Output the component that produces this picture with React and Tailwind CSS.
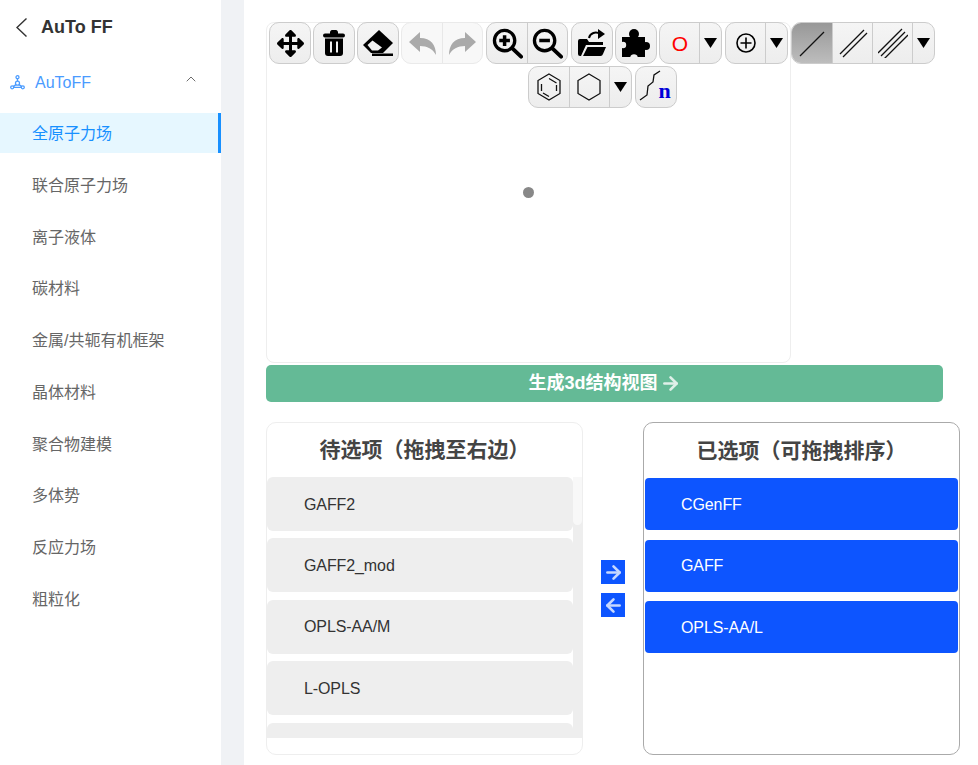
import React from 'react';
import { ChevronUp, ArrowRight, ArrowLeft } from 'lucide-react';
import { FaArrowsAlt } from 'react-icons/fa';

const menuItems = ['全原子力场', '联合原子力场', '离子液体', '碳材料', '金属/共轭有机框架', '晶体材料', '聚合物建模', '多体势', '反应力场', '粗粒化'];
const pending = ['GAFF2', 'GAFF2_mod', 'OPLS-AA/M', 'L-OPLS', ''];
const selected = ['CGenFF', 'GAFF', 'OPLS-AA/L'];

const fontStack = '[font-family:"Liberation_Sans","Noto_Sans_CJK_SC",sans-serif]';

// one cell of a toolbar group
const Cell = ({ w = 'w-[41px]', active, disabled, last, children }) => (
  <div className={`${w} h-full flex items-center justify-center ${last ? '' : 'border-r'} ${
    disabled ? 'border-[#e8e8e8]' : 'border-[#ccc]'
  } ${active ? 'bg-gradient-to-b from-[#989898] to-[#bdbdbd]' : ''}`}>
    {children}
  </div>
);

const Group = ({ disabled, className = '', children }) => (
  <div className={`h-[42px] flex rounded-[10px] overflow-hidden border ${
    disabled ? 'border-[#eaeaea] bg-[#f8f8f8]' : 'border-[#ccc] bg-gradient-to-b from-[#f5f5f5] to-[#ededed]'
  } ${className}`}>
    {children}
  </div>
);

const Caret = () => (
  <svg width="13" height="10" viewBox="0 0 13 10"><path d="M0 0h13L6.5 10z" fill="#000" /></svg>
);

const Trash = () => (
  <svg width="22" height="26" viewBox="0 0 22 26">
    <path d="M7 2.5C7 1 8 0 9 0h4c1 0 2 1 2 2.5V4H7z" fill="#000" />
    <rect x="0" y="3.5" width="22" height="4" rx="2" fill="#000" />
    <path d="M2 8.5h18V23c0 2-1 3-3 3H5c-2 0-3-1-3-3z" fill="#000" />
    <path d="M7 11.5h2v11H7zM13 11.5h2v11h-2z" fill="#f2f2f2" />
  </svg>
);

const Eraser = () => (
  <svg width="30" height="26" viewBox="0 0 30 26">
    <path d="M16 0 30 13 20 23H8L0 15z" fill="#000" />
    <path d="M4.5 15 9.5 10.5 19 17.5 15 20.5H9z" fill="#f2f2f2" />
    <path d="M9 23.5h21V26H9z" fill="#000" />
  </svg>
);

const ReplyArrow = ({ flip }) => (
  <svg width="27" height="23" viewBox="0 0 27 23" className={flip ? '-scale-x-100' : ''}>
    <path d="M0 10 11 0V6C22 6 27 13 27 23 24 17 18 14 11 14V20z" fill="#aaa" />
  </svg>
);

const Magnifier = ({ plus }) => (
  <svg width="31" height="31" viewBox="0 0 32 32">
    <circle cx="13" cy="13" r="10.5" fill="none" stroke="#000" strokeWidth="3.4" />
    <path d="M21 21l9 8.5" stroke="#000" strokeWidth="4" strokeLinecap="round" />
    <path d="M7.5 13h11" stroke="#000" strokeWidth="3.6" />
    {plus && <path d="M13 7.5v11" stroke="#000" strokeWidth="3.6" />}
  </svg>
);

const FolderArrow = () => (
  <svg width="28" height="28" viewBox="0 0 28 28">
    <path d="M0 12a2 2 0 0 1 2-2h7l2 3h14v3H8L3 27H2a2 2 0 0 1-2-2z" fill="#000" />
    <path d="M9.5 18H28l-3 7a3 3 0 0 1-2.5 2H5z" fill="#000" />
    <path d="M11 9C12 4 18 2 22 5" fill="none" stroke="#000" strokeWidth="2" />
    <path d="M20 0l7 5-7 5z" fill="#000" />
  </svg>
);

const Puzzle = () => (
  <svg width="28" height="28" viewBox="0 0 28 28">
    <path d="M0 8h23v20H0z" fill="#000" />
    <circle cx="12" cy="5" r="5" fill="#000" />
    <path d="M9 7h6v3H9z" fill="#000" />
    <circle cx="24" cy="17" r="4" fill="#000" />
    <circle cx="1" cy="16" r="3.2" fill="#f1f1f1" />
    <circle cx="12" cy="29" r="3.8" fill="#efefef" />
  </svg>
);

const Benzene = ({ aromatic }) => (
  <svg width="24" height="28" viewBox="0 0 24 28" fill="none" stroke="#111" strokeWidth="1.3">
    <path d="M12 1 23 7.5v13L12 27 1 20.5v-13z" />
    {aromatic && <path d="M12 5.5 19.5 10M19.5 12v6M4.5 11v7M6 20l6 3.5" />}
  </svg>
);

const Bond = ({ count }) => (
  <svg width="30" height="30" viewBox="0 0 30 30" stroke="#111" strokeWidth="1.3">
    {count === 1 && <path d="M3 28 27 4" />}
    {count === 2 && <><path d="M2 26 26 2" /><path d="M5 29 29 5" /></>}
    {count === 3 && <><path d="M0 25 24 1" /><path d="M3 28 27 4" /><path d="M6 31 30 7" /></>}
  </svg>
);

const Polymer = () => (
  <div className="relative w-[34px] h-[34px]">
    <svg className="absolute left-0 top-0" width="24" height="32" viewBox="0 0 24 32" fill="none" stroke="#111" strokeWidth="1.3">
      <path d="M1 30 8 25 9 16 14 12 15 5 21 1" />
    </svg>
    <span className="absolute left-[20px] top-[8px] text-[22px] leading-[26px] font-bold text-[#0000d8] [font-family:'Liberation_Serif',serif]">n</span>
  </div>
);

const Toolbar = () => (
  <div className="absolute left-0 top-0 w-[672px] flex flex-col items-center gap-[2px]">
    <div className="flex">
      <Group><Cell last w="w-[40px]"><FaArrowsAlt size={27} color="#000" /></Cell></Group>
      <Group className="ml-[2px]"><Cell last w="w-[40px]"><Trash /></Cell></Group>
      <Group className="ml-[2px]"><Cell last w="w-[40px]"><Eraser /></Cell></Group>
      <Group disabled className="ml-[2px]">
        <Cell disabled w="w-[41px]"><ReplyArrow /></Cell>
        <Cell disabled last w="w-[39px]"><ReplyArrow flip /></Cell>
      </Group>
      <Group className="ml-[3px]">
        <Cell w="w-[41px]"><Magnifier plus /></Cell>
        <Cell last w="w-[39px]"><Magnifier /></Cell>
      </Group>
      <Group className="ml-[3px]"><Cell last w="w-[40px]"><FolderArrow /></Cell></Group>
      <Group className="ml-[2px]"><Cell last w="w-[40px]"><Puzzle /></Cell></Group>
      <Group className="ml-[2px]">
        <Cell w="w-[40px]"><span className="pl-[1px] text-[21px] text-[#ff0000] leading-none">O</span></Cell>
        <Cell last w="w-[21px]"><Caret /></Cell>
      </Group>
      <Group className="ml-[3px]">
        <Cell w="w-[40px]">
          <svg width="20" height="20" viewBox="0 0 20 20" fill="none" stroke="#000" strokeWidth="1.6">
            <circle cx="10" cy="10" r="9" />
            <path d="M10 4.5v11M4.5 10h11" />
          </svg>
        </Cell>
        <Cell last w="w-[21px]"><Caret /></Cell>
      </Group>
      <Group className="ml-[3px]">
        <Cell active w="w-[41px]"><Bond count={1} /></Cell>
        <Cell w="w-[40px]"><Bond count={2} /></Cell>
        <Cell w="w-[40px]"><Bond count={3} /></Cell>
        <Cell last w="w-[21px]"><Caret /></Cell>
      </Group>
    </div>
    <div className="flex">
      <Group>
        <Cell w="w-[41px]"><Benzene aromatic /></Cell>
        <Cell w="w-[40px]"><Benzene /></Cell>
        <Cell last w="w-[21px]"><Caret /></Cell>
      </Group>
      <Group className="ml-[3px]"><Cell last w="w-[40px]"><Polymer /></Cell></Group>
    </div>
  </div>
);

const Sidebar = () => (
  <aside className="w-[221px] h-[765px] shrink-0 bg-white">
    <div className="h-[54px] flex items-center pl-[16px]">
      <svg width="11" height="19" viewBox="0 0 11 19" fill="none" stroke="#333" strokeWidth="1.4">
        <path d="M10.5 0.5 1 9.5l9.5 9" />
      </svg>
      <span className="ml-[14px] text-[18px] font-bold text-[#333]">AuTo FF</span>
    </div>
    <div className="h-[56px] flex items-center pl-[10px] pr-[22px] text-[#4a9bff]">
      <svg width="15" height="15" viewBox="0 0 15 15" fill="none" stroke="#4a9bff" strokeWidth="1.3">
        <circle cx="7.5" cy="2.2" r="1.5" />
        <circle cx="7.5" cy="8.2" r="2" />
        <circle cx="2.2" cy="12.3" r="1.5" />
        <circle cx="12.8" cy="12.3" r="1.5" />
        <path d="M7.5 3.7v2.5M6 9.6l-2.6 1.8M9 9.6l2.6 1.8M3.7 12.3h7.6" />
      </svg>
      <span className="ml-[10px] pt-[2px] text-[16px]">AuToFF</span>
      <ChevronUp size={16} strokeWidth={1.3} color="#555" className="ml-auto -mt-[6px]" />
    </div>
    <ul className="mt-[3px]">
      {menuItems.map((item, i) => (
        <li
          key={item}
          className={`h-[40px] mb-[11.75px] pt-[2px] flex items-center pl-[32px] text-[16px] ${
            i === 0 ? 'bg-[#e6f7ff] text-[#1890ff] border-r-[3px] border-[#1890ff]' : 'text-[#666]'
          }`}
        >
          {item}
        </li>
      ))}
    </ul>
  </aside>
);

export default function App() {
  return (
    <div className={`flex w-[978px] h-[765px] overflow-hidden bg-white ${fontStack}`}>
      <Sidebar />
      <div className="w-[23px] shrink-0 bg-[#f0f2f5]" />
      <main className="flex-1 pl-[22px] pt-[22px]">
        <div className="relative w-[677px]">
          <div className="w-[525px] h-[341px] flex items-center justify-center bg-white border border-[#eee] rounded-[8px]">
            <div className="w-[11px] h-[11px] rounded-full bg-[#888] blur-[0.5px]" />
          </div>
          <Toolbar />
        </div>

        <button className="mt-[2px] w-[677px] h-[37px] flex items-center justify-center rounded-[5px] bg-[#64ba96] text-white text-[18px] font-semibold">
          生成3d结构视图
          <ArrowRight size={21} strokeWidth={3} color="#dff0e9" className="ml-[2px]" />
        </button>

        <div className="mt-[20px] flex items-start">
          <section className="w-[317px] h-[333px] bg-white border border-[#eee] rounded-[10px] overflow-hidden">
            <h3 className="h-[54px] flex items-center justify-center text-[21px] font-bold text-[#444]">待选项（拖拽至右边）</h3>
            <div className="flex h-[261px] overflow-hidden">
              <div className="w-[306px] flex flex-col gap-[7.4px]">
                {pending.map((name, i) => (
                  <div key={i} className="h-[54px] shrink-0 pt-[1px] flex items-center pl-[37px] bg-[#eee] rounded-[6px] text-[16px] tracking-[-0.1px] text-[#333]">{name}</div>
                ))}
              </div>
              <div className="w-[9px] h-full bg-[#eee]">
                <div className="h-[48px] bg-[#f8f8f8] rounded-b-[5px]" />
              </div>
            </div>
          </section>

          <div className="w-[60px] h-[333px] flex flex-col items-center pt-[138px] gap-[9px]">
            <div className="w-[24px] h-[24px] flex items-center justify-center bg-[#0d55ff]">
              <ArrowRight size={21} strokeWidth={3} color="#c6d8ff" />
            </div>
            <div className="w-[24px] h-[24px] flex items-center justify-center bg-[#0d55ff]">
              <ArrowLeft size={21} strokeWidth={3} color="#c6d8ff" />
            </div>
          </div>

          <section className="w-[317px] h-[333px] bg-white border border-[#aaa] rounded-[10px] overflow-hidden">
            <h3 className="h-[55px] flex items-center justify-center text-[21px] font-bold text-[#444]">已选项（可拖拽排序）</h3>
            <div className="flex flex-col gap-[9.5px] px-[1px]">
              {selected.map((name) => (
                <div key={name} className="h-[52px] pt-[1px] flex items-center pl-[36px] bg-[#0d55ff] rounded-[4px] text-[16px] tracking-[-0.1px] text-white">{name}</div>
              ))}
            </div>
          </section>
        </div>
      </main>
    </div>
  );
}
